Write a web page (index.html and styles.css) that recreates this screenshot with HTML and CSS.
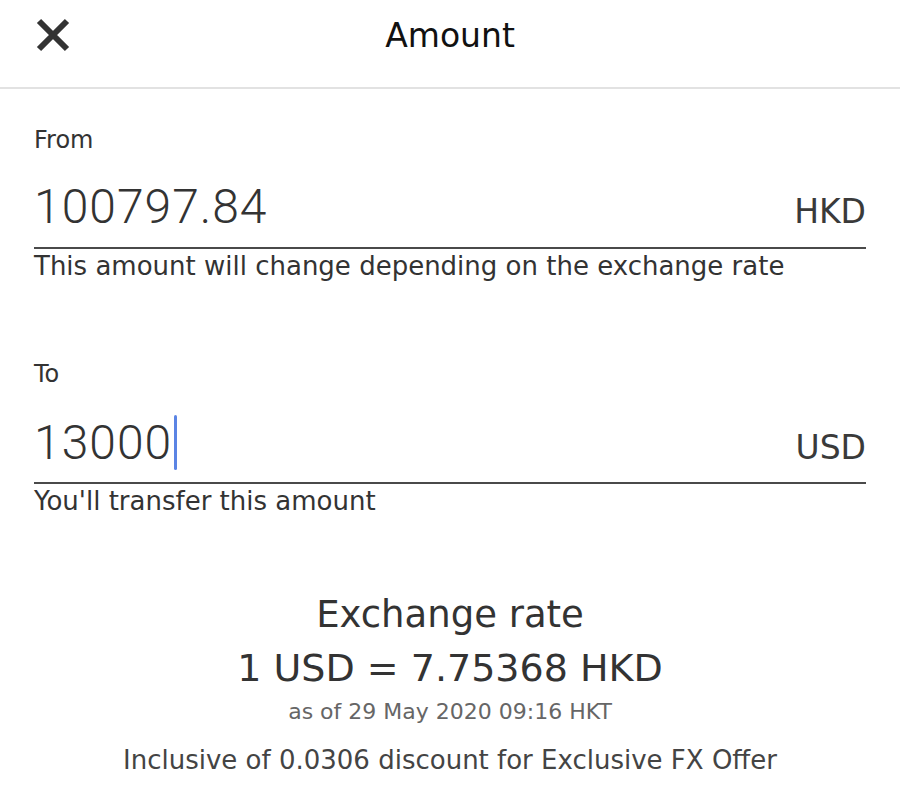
FILE: index.html
```html
<!DOCTYPE html>
<html lang="en">
<head>
<meta charset="utf-8">
<title>Amount</title>
<link rel="stylesheet" href="styles.css">
</head>
<body>
<header class="topbar">
  <button class="close" aria-label="Close">
    <svg width="34" height="34" viewBox="0 0 34 34"><path d="M3 3 L31 31 M31 3 L3 31" stroke="#333" stroke-width="6" fill="none"/></svg>
  </button>
  <h1 class="title">Amount</h1>
  <span class="spacer"></span>
</header>
<main class="content">
  <section class="field field-from">
    <div class="label">From</div>
    <div class="input-row">
      <span class="value">100797.84</span>
      <span class="currency">HKD</span>
    </div>
    <div class="hint">This amount will change depending on the exchange rate</div>
  </section>
  <section class="field field-to">
    <div class="label">To</div>
    <div class="input-row">
      <span class="value">13000<span class="caret"></span></span>
      <span class="currency">USD</span>
    </div>
    <div class="hint">You'll transfer this amount</div>
  </section>
  <section class="rate">
    <div class="rate-title">Exchange rate</div>
    <div class="rate-value">1 USD = 7.75368 HKD</div>
    <div class="rate-time">as of 29 May 2020 09:16 HKT</div>
    <div class="rate-note">Inclusive of 0.0306 discount for Exclusive FX Offer</div>
  </section>
</main>
</body>
</html>
```
FILE: styles.css
```css
html, body {
  margin: 0;
  padding: 0;
  background: #ffffff;
}
body {
  font-family: "DejaVu Sans", "Liberation Sans", sans-serif;
  color: #333333;
}
.topbar {
  box-sizing: border-box;
  height: 89px;
  border-bottom: 2px solid #e2e2e2;
  display: grid;
  grid-template-columns: 1fr auto 1fr;
  align-items: start;
  padding: 16px 36px 0 36px;
}
.close {
  justify-self: start;
  border: 0;
  background: none;
  padding: 0;
  margin: 2px 0 0 0;
  width: 34px;
  height: 34px;
  display: block;
}
.close svg { display: block; }
.title {
  margin: 0;
  font-weight: normal;
  font-size: 33px;
  line-height: 40px;
  color: #111111;
}
.content {
  padding: 0 34px;
}
.field-from { padding-top: 36px; }
.field-to { padding-top: 77px; }
.label {
  font-size: 24px;
  line-height: 30px;
  color: #333333;
}
.input-row {
  display: flex;
  justify-content: space-between;
  align-items: baseline;
  margin-top: 24px;
  padding-bottom: 12px;
  border-bottom: 2px solid #4a4a4a;
}
.field-to .input-row {
  margin-top: 26px;
  padding-bottom: 11px;
}
.value {
  font-family: Roboto, "Liberation Sans", sans-serif;
  font-weight: 300;
  font-size: 48px;
  line-height: 56px;
  color: #333333;
  letter-spacing: 1px;
}
.caret {
  display: inline-block;
  width: 3px;
  height: 55px;
  margin-left: 2px;
  background: #5b84e4;
  border-radius: 2px;
  vertical-align: top;
}
.currency {
  font-size: 33px;
  line-height: 40px;
  color: #3a3a3a;
}
.hint {
  margin-top: 1px;
  font-size: 26px;
  line-height: 32px;
  color: #333333;
}
.rate {
  text-align: center;
  padding-top: 76px;
}
.rate-title {
  font-size: 37px;
  line-height: 44px;
  color: #333333;
}
.rate-value {
  margin-top: 8px;
  font-size: 38px;
  line-height: 46px;
  color: #333333;
}
.rate-time {
  margin-top: 7px;
  font-size: 22px;
  line-height: 28px;
  color: #666666;
}
.rate-note {
  margin-top: 18px;
  font-size: 26px;
  line-height: 32px;
  color: #444444;
}
```
